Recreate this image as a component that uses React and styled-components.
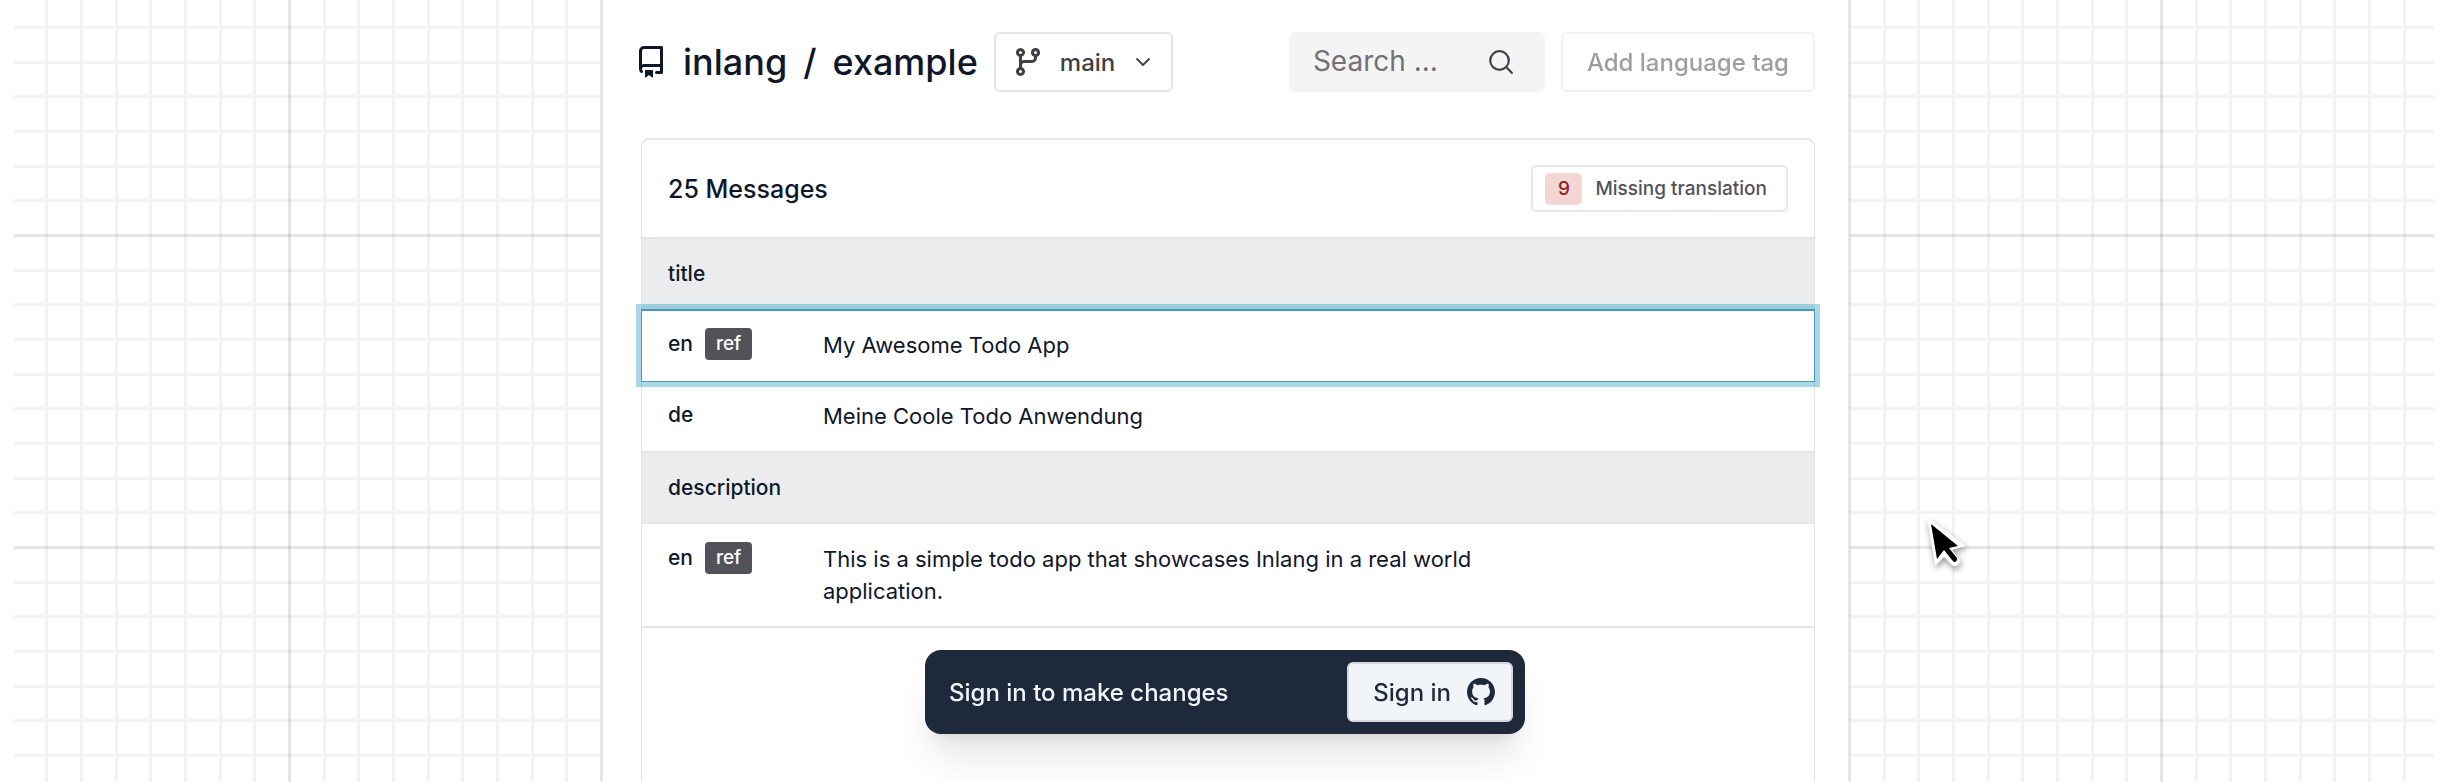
import React from "react";
import styled, { createGlobalStyle } from "styled-components";
import { BsGithub } from "react-icons/bs";

const GlobalStyle = createGlobalStyle`
  *, *::before, *::after { box-sizing: border-box; }
  body {
    margin: 0;
    background: #fff;
    color: #0f172a;
    font-family: Inter, "Liberation Sans", sans-serif;
    font-size: 22px;
  }
  button, input, select { font: inherit; color: inherit; }
`;

const Page = styled.div`
  position: relative;
  display: flex;
  justify-content: center;
  min-height: 100vh;
  overflow: hidden;
`;

const GridBackdrop = styled.svg`
  position: absolute;
  inset: 0 16px 0 14px;
  width: calc(100% - 30px);
  height: 100%;
`;

const Panel = styled.main`
  position: relative;
  display: flex;
  flex-direction: column;
  gap: 46px;
  width: 100%;
  max-width: 1250px;
  padding: 32px 33px 0 36px;
  background: #fff;
  background-clip: padding-box;
  border-left: 3px solid #e6e6e6;
  border-right: 2px solid #e6e6e6;
`;

const Toolbar = styled.header`
  display: flex;
  justify-content: space-between;
  align-items: center;
  gap: 16px;
`;

const ToolGroup = styled.div`
  display: flex;
  align-items: center;
  gap: 16px;
`;

const RepoPath = styled.h1`
  display: flex;
  align-items: center;
  gap: 16px;
  margin: 0;
  font-size: 36px;
  font-weight: 500;
  line-height: 48px;
`;

const RepoLink = styled.a`
  color: inherit;
  text-decoration: none;
`;

const BranchPicker = styled.label`
  display: grid;
  grid-template-columns: 50px 1fr 38px;
  align-items: center;
  color: #3f3f46;

  > * { grid-row: 1; }
  > svg { pointer-events: none; z-index: 1; }
  > svg:first-child { grid-column: 1; justify-self: end; }
  > svg:last-child { grid-column: 3; }
`;

const BranchSelect = styled.select`
  grid-column: 1 / -1;
  height: 60px;
  padding: 0 55px 0 64px;
  appearance: none;
  background: #fff;
  border: 2px solid #e4e4e7;
  border-radius: 6px;
  font-size: 24px;
  font-weight: 500;
`;

const SearchBox = styled.label`
  display: flex;
  align-items: center;
  width: 256px;
  height: 60px;
  padding: 0 32px 0 24px;
  background: #f4f4f4;
  border-radius: 6px;
  color: #3f3f46;
`;

const SearchInput = styled.input`
  flex: 1;
  min-width: 0;
  height: 100%;
  padding: 0 0 2px;
  border: 0;
  background: none;
  outline: none;
  font-size: 28px;

  &::placeholder { color: #71717a; opacity: 1; }
`;

const Button = styled.button`
  display: flex;
  align-items: center;
  gap: 16px;
  height: 60px;
  padding: ${(p) => (p.$primary ? "0 16px 0 24px" : "0 24px")};
  background: ${(p) => (p.$primary ? "#f1f4f9" : "#fff")};
  border: 2px solid ${(p) => (p.$primary ? "#d4d7dc" : "#e4e4e7")};
  border-radius: 6px;
  color: ${(p) => (p.$primary ? "#1e293b" : "#3f3f46")};
  font-size: 24px;
  font-weight: 500;
  white-space: nowrap;

  &:disabled { opacity: 0.5; }
`;

const Card = styled.section`
  flex: 1;
  margin-left: 2px;
  border: 1px solid #e4e4e7;
  border-top: 2px solid #e8e8ea;
  border-bottom: 0;
  border-radius: 8px 8px 0 0;
`;

const CardHead = styled.div`
  display: flex;
  justify-content: space-between;
  align-items: center;
  padding: 25px 26px;
  border-bottom: 1px solid #e4e4e7;
`;

const CardTitle = styled.h2`
  margin: 0;
  font-size: 25px;
  font-weight: 500;
  line-height: 32px;
`;

const LintFilter = styled.button`
  display: flex;
  align-items: center;
  gap: 13px;
  height: 47px;
  padding: 0 19px 0 12px;
  background: #fff;
  border: 2px solid #e8e8ea;
  border-radius: 5px;
  color: #52525b;
  font-size: 19px;
  font-weight: 500;
`;

const Count = styled.span`
  min-width: 37px;
  line-height: 32px;
  background: #f4d6d4;
  border-radius: 5px;
  color: #8b241d;
  text-align: center;
`;

const MessageTable = styled.table`
  display: block;
  border-bottom: 1px solid #e4e4e7;
`;

const MessageGroup = styled.tbody`
  display: block;
`;

const KeyRow = styled.tr`
  display: block;
  padding: 20px 26px;
  background: #ebecee;
  border-top: 1px solid #e4e4e7;
  border-bottom: 2px solid #e4e6e9;
`;

const KeyCell = styled.th`
  display: block;
  padding: 0;
  font-size: 21px;
  font-weight: 500;
  line-height: 29px;
  text-align: left;
`;

const VariantRow = styled.tr`
  position: relative;
  z-index: ${(p) => (p.$focused ? 1 : 0)};
  display: grid;
  grid-template-columns: 155px 7fr 3fr;
  padding: 19px 26px;
  border-bottom: 1px solid #e4e4e7;
  ${(p) =>
    p.$focused &&
    `border-color: transparent;
     box-shadow: inset 0 1px #4a99b8, 0 0 0 1px #4a99b8, 0 0 0 6px rgba(37, 160, 197, 0.4);`}
`;

const LanguageCell = styled.th`
  display: flex;
  align-items: center;
  gap: 12px;
  height: 30px;
  padding: 0;
  font-size: 21px;
  font-weight: 500;
  line-height: 28px;
`;

const RefTag = styled.span`
  padding: 0 11px;
  background: #52525b;
  border-radius: 4px;
  color: #fff;
  font-size: 19px;
  line-height: 32px;
`;

const TextCell = styled.td`
  padding: 0;
  font-size: 22px;
  line-height: 32px;
`;

const SignInBar = styled.aside`
  position: fixed;
  bottom: 48px;
  left: 50%;
  z-index: 2;
  display: flex;
  justify-content: space-between;
  align-items: center;
  width: 600px;
  margin-left: -300px;
  padding: 12px 12px 12px 24px;
  background: #1e293b;
  border-radius: 16px;
  box-shadow: 0 31px 39px -8px rgba(0, 0, 0, 0.1), 0 12px 16px -9px rgba(0, 0, 0, 0.1);
  color: #f1f5f9;
  font-size: 24px;
  font-weight: 500;
`;

const Pointer = styled.svg`
  position: absolute;
  top: 510px;
  left: 1920px;
  filter: drop-shadow(1px 3px 3px rgba(0, 0, 0, 0.4));
`;

const minorLines = [35, 69, 104, 139, 173, 208, 243, 277];

const Grid = () => (
  <GridBackdrop aria-hidden="true">
    <defs>
      <pattern id="grid" x="274" y="234" width="312" height="312" patternUnits="userSpaceOnUse">
        {minorLines.map((n) => (
          <g key={n} fill="#f3f3f3">
            <rect x={n} width="3" height="312" />
            <rect y={n} width="312" height="3" />
          </g>
        ))}
        <rect width="3" height="312" fill="#000" fillOpacity="0.1" />
        <rect width="312" height="3" fill="#000" fillOpacity="0.1" />
      </pattern>
    </defs>
    <rect width="100%" height="100%" fill="url(#grid)" />
  </GridBackdrop>
);

const RepoIcon = () => (
  <svg width="28" height="32" viewBox="2 0 14 16" fill="currentColor" aria-hidden="true">
    <path d="M2 2.5A2.5 2.5 0 0 1 4.5 0h8.75a.75.75 0 0 1 .75.75v12.5a.75.75 0 0 1-.75.75h-2.5a.75.75 0 0 1 0-1.5h1.75v-2h-8a1 1 0 0 0-.714 1.7.75.75 0 1 1-1.072 1.05A2.495 2.495 0 0 1 2 11.5Zm10.5-1h-8a1 1 0 0 0-1 1v6.708A2.486 2.486 0 0 1 4.5 9h8ZM5 12.25a.25.25 0 0 1 .25-.25h3.5a.25.25 0 0 1 .25.25v3.25a.25.25 0 0 1-.4.2l-1.45-1.087a.249.249 0 0 0-.3 0L5.4 15.7a.25.25 0 0 1-.4-.2Z" />
  </svg>
);

const BranchIcon = () => (
  <svg width="32" height="32" viewBox="0 0 16 16" fill="currentColor" aria-hidden="true">
    <path d="M9.5 3.25a2.25 2.25 0 1 1 3 2.122V6A2.5 2.5 0 0 1 10 8.5H6a1 1 0 0 0-1 1v1.128a2.251 2.251 0 1 1-1.5 0V5.372a2.25 2.25 0 1 1 1.5 0v1.836A2.493 2.493 0 0 1 6 7h4a1 1 0 0 0 1-1v-.628A2.25 2.25 0 0 1 9.5 3.25Zm-6 0a.75.75 0 1 0 1.5 0 .75.75 0 0 0-1.5 0Zm8.25-.75a.75.75 0 1 0 0 1.5.75.75 0 0 0 0-1.5ZM4.25 12a.75.75 0 1 0 0 1.5.75.75 0 0 0 0-1.5Z" />
  </svg>
);

const ChevronIcon = () => (
  <svg width="16" height="16" viewBox="0 0 16 16" fill="none" stroke="currentColor" strokeWidth="1.8" strokeLinecap="round" strokeLinejoin="round" aria-hidden="true">
    <path d="M2 5l6 6 6-6" />
  </svg>
);

const SearchIcon = () => (
  <svg width="24" height="24" viewBox="0 0 24 24" fill="none" stroke="currentColor" strokeWidth="2.2" strokeLinecap="round" aria-hidden="true">
    <circle cx="10.5" cy="10.5" r="9.3" />
    <path d="M17.5 17.5l5.3 5.3" />
  </svg>
);

const messages = [
  {
    key: "title",
    variants: [
      { language: "en", reference: true, focused: true, text: "My Awesome Todo App" },
      { language: "de", text: "Meine Coole Todo Anwendung" },
    ],
  },
  {
    key: "description",
    variants: [
      {
        language: "en",
        reference: true,
        text: "This is a simple todo app that showcases Inlang in a real world application.",
      },
    ],
  },
];

export default function App() {
  return (
    <Page>
      <GlobalStyle />
      <Grid />
      <Panel>
        <Toolbar>
          <ToolGroup>
            <RepoPath>
              <RepoIcon />
              <RepoLink href="#inlang">inlang</RepoLink>
              <span>/</span>
              <RepoLink href="#example">example</RepoLink>
            </RepoPath>
            <BranchPicker>
              <BranchIcon />
              <BranchSelect aria-label="Branch">
                <option>main</option>
              </BranchSelect>
              <ChevronIcon />
            </BranchPicker>
          </ToolGroup>
          <ToolGroup>
            <SearchBox>
              <SearchInput type="text" placeholder="Search ..." aria-label="Search" />
              <SearchIcon />
            </SearchBox>
            <Button type="button" disabled>Add language tag</Button>
          </ToolGroup>
        </Toolbar>
        <Card>
          <CardHead>
            <CardTitle>25 Messages</CardTitle>
            <LintFilter type="button">
              <Count>9</Count>
              Missing translation
            </LintFilter>
          </CardHead>
          <MessageTable>
            {messages.map((message) => (
              <MessageGroup key={message.key}>
                <KeyRow>
                  <KeyCell colSpan={2} scope="rowgroup">{message.key}</KeyCell>
                </KeyRow>
                {message.variants.map((variant) => (
                  <VariantRow key={variant.language} $focused={variant.focused}>
                    <LanguageCell scope="row">
                      {variant.language}
                      {variant.reference && <RefTag>ref</RefTag>}
                    </LanguageCell>
                    <TextCell>{variant.text}</TextCell>
                  </VariantRow>
                ))}
              </MessageGroup>
            ))}
          </MessageTable>
        </Card>
      </Panel>
      <SignInBar>
        <span>Sign in to make changes</span>
        <Button type="button" $primary>
          Sign in
          <BsGithub size={28} aria-hidden="true" />
        </Button>
      </SignInBar>
      <Pointer width="52" height="64" viewBox="0 0 52 64" aria-hidden="true">
        <path d="M7 7L15 56 24 47 32 55a5 5 0 0 0 8-5L32 40l14-4z" fill="#fff" />
        <path d="M11 14L17 49l7-9 8 10 2 2a3 3 0 0 0 3-4L29 38l9-2z" fill="#000" />
      </Pointer>
    </Page>
  );
}
